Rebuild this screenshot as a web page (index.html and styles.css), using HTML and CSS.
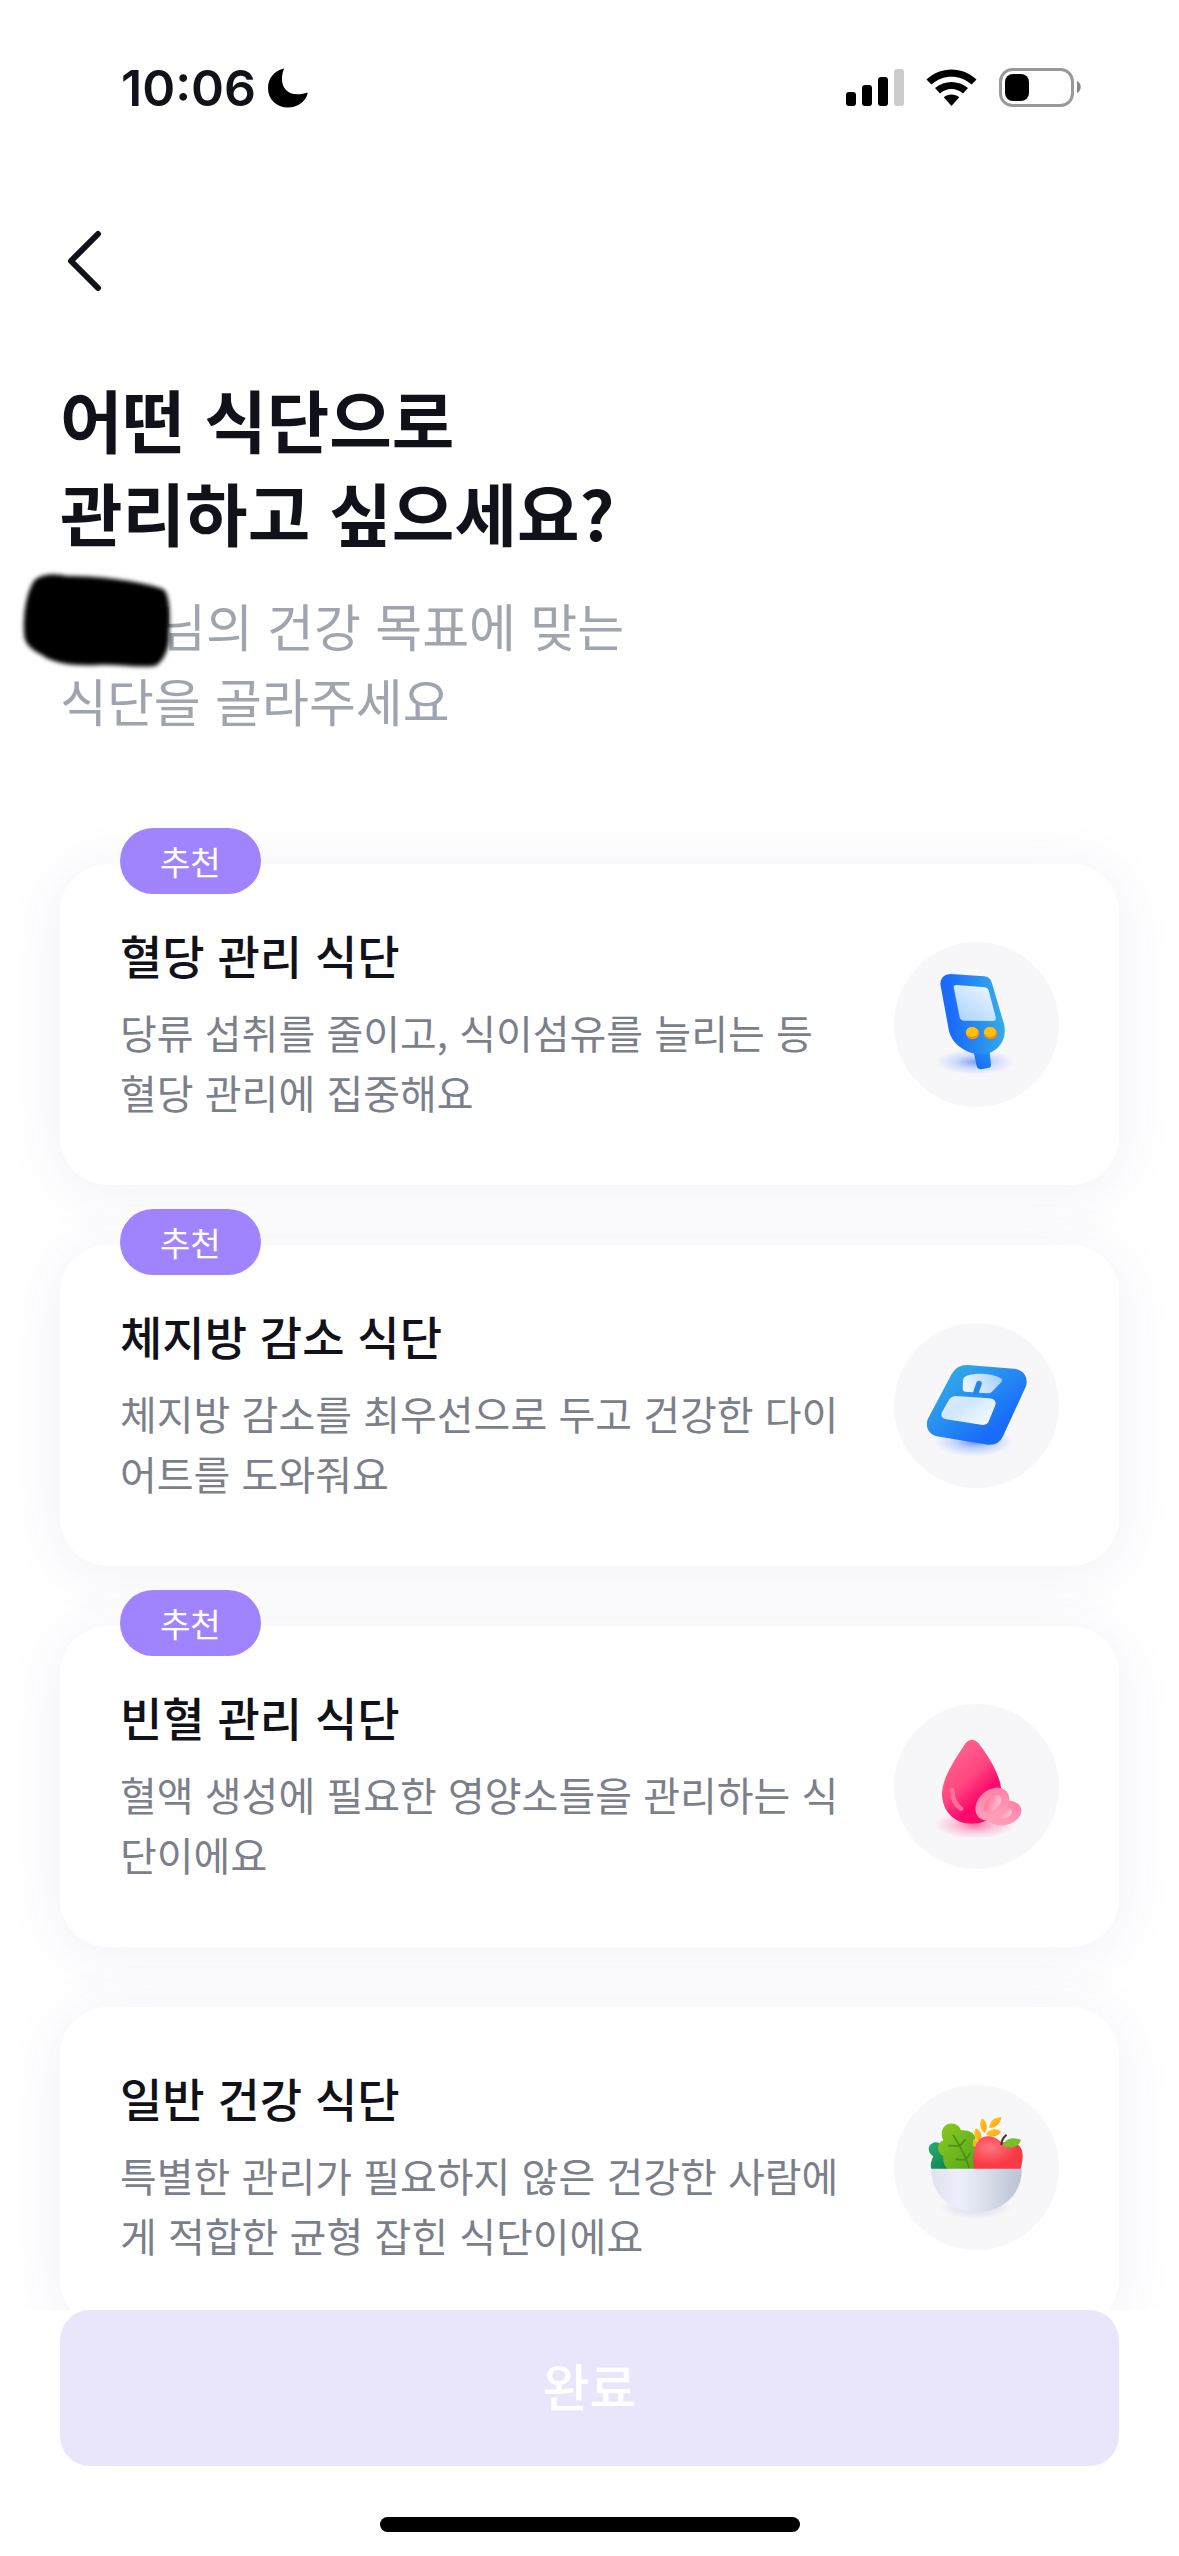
FILE: index.html
```html
<!DOCTYPE html>
<html lang="ko">
<head>
    <meta charset="UTF-8">
    <meta name="viewport" content="width=device-width, initial-scale=1.0">
    <title>식단 선택</title>
    <link rel="stylesheet" href="styles.css">
</head>
<body>
    <div id="app">
        <!-- 상태바 -->
        <div class="status">
            <div class="status_time">
                <span>10:06</span>
                <svg width="40" height="40" viewBox="0 0 40 40" aria-hidden="true">
                    <path d="M15.500 0.500 C6 3 0 10.500 0 20 C0 31.500 8.500 39.500 20 39.500 C29.500 39.500 37 34 39.500 26 C39.800 25 39 24.600 38 25 C35 26 32.500 26.300 29.500 26.300 C19.500 26.300 14 20 14 11 C14 7.500 14.500 4.500 15.800 1.600 C16.100 0.800 16 0.400 15.500 0.500 Z"/>
                </svg>
            </div>
            <svg width="236" height="40" viewBox="0 0 236 40" aria-hidden="true">
                <rect x="0" y="24" width="10" height="14" rx="3"/>
                <rect x="16" y="17" width="10" height="21" rx="3"/>
                <rect x="32" y="9" width="10" height="29" rx="3"/>
                <rect x="48" y="1" width="10" height="37" rx="3" fill="#ccc"/>
                <path d="M80.500 11.500 C94 -2 117 -2 130.500 11.500 L125.500 16.500 C114.500 6 96.500 6 85.500 16.500 Z"/>
                <path d="M89 20 C98.500 12 112.500 12 122 20 L117 25.500 C110.500 19.500 100.500 19.500 94 25.500 Z"/>
                <path d="M97.800 29.300 C102 25.500 109 25.500 113.200 29.300 L105.500 38 Z"/>
                <rect x="154.500" y="1.500" width="72" height="36" rx="12" fill="none" stroke="#999" stroke-width="3"/>
                <rect x="159" y="6" width="24" height="27" rx="8"/>
                <path d="M231 13 C236 15 236 23 231 25 Z" fill="#888"/>
            </svg>
        </div>

        <header>
            <button type="button" class="back" aria-label="뒤로">
                <svg width="36" height="62" viewBox="0 0 36 62" aria-hidden="true">
                    <path d="M32 4 L5 31 L32 58" fill="none" stroke="#111219" stroke-width="6" stroke-linecap="round" stroke-linejoin="round"/>
                </svg>
            </button>
        </header>

        <main>
            <h1>어떤 식단으로<br>관리하고 싶으세요?</h1>
            <p class="sub"><span class="name"><svg viewBox="0 0 164 110" aria-hidden="true">
                <defs><filter id="soft"><feGaussianBlur stdDeviation="2"/></filter></defs>
                <path d="M20 14 C28 6 42 7 52 9 C84 9 122 13 149 22 C157 28 156 52 155 74 C154 84 148 96 141 99 C120 101 102 97 84 98 C60 99 40 97 28 88 C16 82 10 76 10 66 C9 48 12 26 20 14 Z" filter="url(#soft)"/>
            </svg></span>님의 건강 목표에 맞는<br>식단을 골라주세요</p>

            <ul class="list">
                <li>
                    <button type="button" class="card">
                        <span class="badge">추천</span>
                        <span class="text">
                            <strong>혈당 관리 식단</strong>
                            <span class="desc">당류 섭취를 줄이고, 식이섬유를 늘리는 등 혈당 관리에 집중해요</span>
                        </span>
                        <svg class="icon" viewBox="42 66 495 495" aria-hidden="true">
                            <defs>
                                <linearGradient id="m1" x1="0" y1="0.500" x2="1" y2="0.400">
                                    <stop offset="0.150" stop-color="#1a6bfb"/>
                                    <stop offset="1" stop-color="#35aeea"/>
                                </linearGradient>
                                <linearGradient id="m2" x1="1" y1="0" x2="0.200" y2="1">
                                    <stop offset="0" stop-color="#f3f8ff"/>
                                    <stop offset="1" stop-color="#acd5fd"/>
                                </linearGradient>
                                <linearGradient id="m3" x1="0" y1="1" x2="1" y2="0">
                                    <stop offset="0" stop-color="#1764f6"/>
                                    <stop offset="1" stop-color="#2290f0"/>
                                </linearGradient>
                                <radialGradient id="m4">
                                    <stop offset="0" stop-color="#2f6dff" stop-opacity="0.600"/>
                                    <stop offset="0.500" stop-color="#2f6dff" stop-opacity="0.200"/>
                                    <stop offset="1" stop-color="#2f6dff" stop-opacity="0"/>
                                </radialGradient>
                            </defs>
                            <ellipse cx="285" cy="426" rx="118" ry="38" fill="url(#m4)"/>
                            <path d="M281 396 L329 396 L333 434 Q334 442 326 443 L304 448 Q293 448 290 438 Z" fill="url(#m3)"/>
                            <path d="M181 192 Q182 163 212 162 L312 169 Q330 170 335 187 L372 312 C384 362 350 402 303 403 C258 402 218 374 207 334 Z" fill="url(#m1)"/>
                            <path d="M221 202 Q220 194 230 195 L315 202 Q323 203 326 211 L347 291 Q349 302 339 303 L250 302 Q241 301 239 292 Z" fill="url(#m2)"/>
                            <ellipse cx="278" cy="340" rx="20" ry="18" fill="#fb8a14"/>
                            <ellipse cx="276" cy="336" rx="18" ry="15" fill="#ffc20a"/>
                            <ellipse cx="332" cy="340" rx="20" ry="18" fill="#fb8a14"/>
                            <ellipse cx="330" cy="336" rx="18" ry="15" fill="#ffc20a"/>
                        </svg>
                    </button>
                </li>
                <li>
                    <button type="button" class="card">
                        <span class="badge">추천</span>
                        <span class="text">
                            <strong>체지방 감소 식단</strong>
                            <span class="desc">체지방 감소를 최우선으로 두고 건강한 다이어트를 도와줘요</span>
                        </span>
                        <svg class="icon" viewBox="42 69 495 495" aria-hidden="true">
                            <defs>
                                <linearGradient id="s1" x1="0.200" y1="0.200" x2="0.800" y2="0.800">
                                    <stop offset="0" stop-color="#30a5e9"/>
                                    <stop offset="0.450" stop-color="#258bf2"/>
                                    <stop offset="0.900" stop-color="#196cfa"/>
                                </linearGradient>
                                <linearGradient id="s2" x1="1" y1="0.300" x2="0" y2="0.600">
                                    <stop offset="0" stop-color="#a5d0fd"/>
                                    <stop offset="1" stop-color="#edf6ff"/>
                                </linearGradient>
                                <linearGradient id="s3" x1="0" y1="0" x2="1" y2="0.800">
                                    <stop offset="0" stop-color="#dceeff"/>
                                    <stop offset="0.400" stop-color="#cfe7ff"/>
                                    <stop offset="1" stop-color="#f5faff"/>
                                </linearGradient>
                                <radialGradient id="s4">
                                    <stop offset="0" stop-color="#2f5fff" stop-opacity="0.650"/>
                                    <stop offset="0.500" stop-color="#2f6dff" stop-opacity="0.250"/>
                                    <stop offset="1" stop-color="#2f6dff" stop-opacity="0"/>
                                </radialGradient>
                            </defs>
                            <ellipse cx="282" cy="424" rx="118" ry="46" fill="url(#s4)"/>
                            <path d="M215 222 Q230 195 262 195 L402 206 C430 208 446 232 438 258 L369 409 Q355 438 323 434 L170 409 C146 403 135 381 143 358 Z" fill="url(#s1)"/>
                            <path d="M249 239 Q250 231 260 227 C292 217 333 220 360 233 Q369 238 364 246 L336 275 Q331 280 322 280 L256 275 Q248 274 248 266 Z" fill="url(#s2)"/>
                            <path d="M297 251 L288 277" stroke="#2583ee" stroke-width="17" stroke-linecap="round"/>
                            <path d="M206 301 Q213 288 229 288 L329 295 Q351 298 346 316 L325 367 Q320 376 308 375 L199 358 Q180 353 185 338 Z" fill="url(#s3)"/>
                        </svg>
                    </button>
                </li>
                <li>
                    <button type="button" class="card">
                        <span class="badge">추천</span>
                        <span class="text">
                            <strong>빈혈 관리 식단</strong>
                            <span class="desc">혈액 생성에 필요한 영양소들을 관리하는 식단이에요</span>
                        </span>
                        <svg class="icon" viewBox="42 71 495 495" aria-hidden="true">
                            <defs>
                                <linearGradient id="b1" x1="0.250" y1="0.200" x2="0.700" y2="0.850">
                                    <stop offset="0" stop-color="#ff5c8b"/>
                                    <stop offset="0.400" stop-color="#ff4881"/>
                                    <stop offset="0.800" stop-color="#fc096b"/>
                                </linearGradient>
                                <linearGradient id="b2" x1="0" y1="1" x2="1" y2="0">
                                    <stop offset="0" stop-color="#ffa6be"/>
                                    <stop offset="1" stop-color="#ff7ba4"/>
                                </linearGradient>
                                <linearGradient id="b3" x1="0" y1="0" x2="1" y2="1">
                                    <stop offset="0.300" stop-color="#ff83a8"/>
                                    <stop offset="1" stop-color="#ffd0de"/>
                                </linearGradient>
                                <radialGradient id="b4">
                                    <stop offset="0" stop-color="#ff2f78" stop-opacity="0.650"/>
                                    <stop offset="0.500" stop-color="#ff2f78" stop-opacity="0.250"/>
                                    <stop offset="1" stop-color="#ff2f78" stop-opacity="0"/>
                                </radialGradient>
                            </defs>
                            <ellipse cx="284" cy="433" rx="122" ry="42" fill="url(#b4)"/>
                            <path d="M257 188 Q276 169 295 188 C326 228 363 287 364 333 C365 391 331 430 276 430 C222 430 186 391 186 340 C187 291 227 234 257 188 Z" fill="url(#b1)"/>
                            <path d="M217 330 C218 355 226 375 243 385" fill="none" stroke="#ff709b" stroke-width="14" stroke-linecap="round"/>
                            <g transform="rotate(-14 372 398)">
                                <ellipse cx="372" cy="398" rx="53" ry="36" fill="url(#b2)"/>
                                <ellipse cx="370" cy="397" rx="27" ry="17" fill="url(#b3)"/>
                            </g>
                            <g transform="rotate(-42 337 371)">
                                <ellipse cx="337" cy="371" rx="57" ry="42" fill="url(#b2)"/>
                                <ellipse cx="337" cy="371" rx="33" ry="18" fill="url(#b3)"/>
                            </g>
                        </svg>
                    </button>
                </li>
                <li>
                    <button type="button" class="card">
                        <span class="text">
                            <strong>일반 건강 식단</strong>
                            <span class="desc">특별한 관리가 필요하지 않은 건강한 사람에게 적합한 균형 잡힌 식단이에요</span>
                        </span>
                        <svg class="icon" viewBox="42 74 495 495" aria-hidden="true">
                            <defs>
                                <linearGradient id="h1" x1="0" y1="0" x2="1" y2="0">
                                    <stop offset="0" stop-color="#dfe1ef"/>
                                    <stop offset="0.300" stop-color="#eeeffc"/>
                                    <stop offset="0.600" stop-color="#dadeeb"/>
                                    <stop offset="1" stop-color="#bac2d5"/>
                                </linearGradient>
                                <linearGradient id="h2" x1="0" y1="0" x2="1" y2="1">
                                    <stop offset="0" stop-color="#8ccb20"/>
                                    <stop offset="1" stop-color="#57a51d"/>
                                </linearGradient>
                                <linearGradient id="h3" x1="0" y1="0" x2="1" y2="1">
                                    <stop offset="0" stop-color="#2dae70"/>
                                    <stop offset="1" stop-color="#087c49"/>
                                </linearGradient>
                                <radialGradient id="h4" cx="0.350" cy="0.350" r="0.550">
                                    <stop offset="0" stop-color="#ff7380"/>
                                    <stop offset="1" stop-color="#f93943"/>
                                </radialGradient>
                                <radialGradient id="h5">
                                    <stop offset="0" stop-color="#9aa2c4" stop-opacity="0.400"/>
                                    <stop offset="1" stop-color="#9aa2c4" stop-opacity="0"/>
                                </radialGradient>
                                <linearGradient id="h6" x1="0" y1="0" x2="1" y2="1">
                                    <stop offset="0" stop-color="#ffc91c"/>
                                    <stop offset="1" stop-color="#f9a618"/>
                                </linearGradient>
                            </defs>
                            <ellipse cx="288" cy="440" rx="110" ry="36" fill="url(#h5)"/>
                            <path d="M154 326 C150 311 155 298 160 288 C143 278 142 256 155 250 C164 244 172 246 179 249 L222 326 Z" fill="url(#h3)"/>
                            <path d="M204 326 C190 317 190 298 189 287 C169 278 170 247 190 240 C181 221 184 199 204 191 C222 185 239 195 243 210 C263 207 282 216 286 232 L290 326 Z" fill="url(#h2)"/>
                            <path d="M220 225 C235 248 256 286 267 321 M239 257 L256 238 M239 257 L207 256 M255 299 L270 280 M255 299 L229 297" fill="none" stroke="#479017" stroke-width="5" stroke-linecap="round"/>
                            <g fill="url(#h6)">
                                <path d="M306 174 C322 184 325 205 314 218 C299 207 297 187 306 174 Z"/>
                                <path d="M328 203 C328 183 343 171 364 171 C362 190 348 203 328 203 Z"/>
                                <path d="M318 221 C330 205 350 203 363 214 C353 230 333 233 318 221 Z"/>
                                <path d="M288 203 C304 212 309 231 299 245 C282 237 278 217 288 203 Z"/>
                                <path d="M281 236 L293 242 L288 262 L278 256 Z"/>
                            </g>
                            <path d="M282 326 C276 285 282 229 324 228 C342 228 352 236 362 244 C372 249 389 240 405 247 C436 261 429 298 422 326 Z" fill="url(#h4)"/>
                            <path d="M364 252 C365 240 370 232 378 225" fill="none" stroke="#4a2d20" stroke-width="6" stroke-linecap="round"/>
                            <path d="M368 255 C377 235 399 228 423 239 C416 261 390 268 368 255 Z" fill="#76c12b"/>
                            <path d="M154 325 L425 325 C427 392 379 454 290 454 C201 454 152 392 154 325 Z" fill="url(#h1)"/>
                        </svg>
                    </button>
                </li>
            </ul>
        </main>

        <footer>
            <button type="button" class="done" disabled>완료</button>
            <div class="home"></div>
        </footer>
    </div>
</body>
</html>
```
FILE: styles.css
```css
* {
    margin: 0;
    padding: 0;
    box-sizing: border-box;
}
body {
    background: #fff;
    color: #111219;
    font-family: "Noto Sans CJK KR", sans-serif;
}
button {
    border: 0;
    background: none;
    font: inherit;
    color: inherit;
}
li {
    list-style: none;
}
#app {
    display: flex;
    flex-direction: column;
    height: 100vh;
}

/* 상태바 */
.status {
    display: flex;
    justify-content: space-between;
    align-items: center;
    height: 176px;
    padding: 0 97px 0 121px;
}
.status_time {
    display: flex;
    align-items: center;
    gap: 12px;
    font-family: Inter, sans-serif;
    font-size: 50px;
    font-weight: 600;
    line-height: 60px;
}

header {
    padding: 54px 66px 20px;
}
.back {
    display: block;
}
.back svg {
    display: block;
}

/* 본문 */
main {
    flex: 1;
    min-height: 0;
    padding: 60px 60px 0;
    overflow: auto;
    scrollbar-width: none;
}
h1 {
    font-size: 68px;
    font-weight: 700;
    line-height: 93px;
}
.sub {
    margin-top: 30px;
    color: #9fa4af;
    font-size: 51px;
    line-height: 75px;
}
.name {
    display: inline-block;
    position: relative;
    width: 99px;
}
.name svg {
    position: absolute;
    left: -46px;
    bottom: -30px;
    width: 164px;
    height: 110px;
}
.list {
    display: flex;
    flex-direction: column;
    gap: 60px;
    padding: 126px 0 60px;
}
.card {
    display: flex;
    align-items: center;
    gap: 42px;
    position: relative;
    width: 100%;
    padding: 57px 60px;
    border-radius: 48px;
    background: #fff;
    box-shadow: 0 6px 60px rgba(80, 70, 160, 0.08);
    text-align: left;
}
.badge {
    position: absolute;
    top: -36px;
    left: 60px;
    padding: 0 40px;
    border-radius: 33px;
    background: #a084ff;
    color: #fff;
    font-size: 33px;
    line-height: 66px;
}
.text {
    flex: 1;
    padding-bottom: 6px;
}
.text strong {
    display: block;
    margin-bottom: 15px;
    font-size: 46px;
    font-weight: 500;
    line-height: 66px;
}
.desc {
    display: block;
    color: #7b7f8c;
    font-size: 40px;
    line-height: 60px;
}
.icon {
    flex: none;
    width: 165px;
    height: 165px;
    border-radius: 50%;
    background: #f7f7fa;
}

/* 하단 버튼 */
footer {
    padding: 0 60px 24px;
}
.done {
    display: block;
    width: 100%;
    height: 156px;
    padding-bottom: 6px;
    border-radius: 30px;
    background: #e9e6fb;
    color: #fff;
    font-size: 51px;
    font-weight: 500;
}
.home {
    width: 420px;
    height: 15px;
    margin: 51px auto 0;
    border-radius: 8px;
    background: #000;
}
```
